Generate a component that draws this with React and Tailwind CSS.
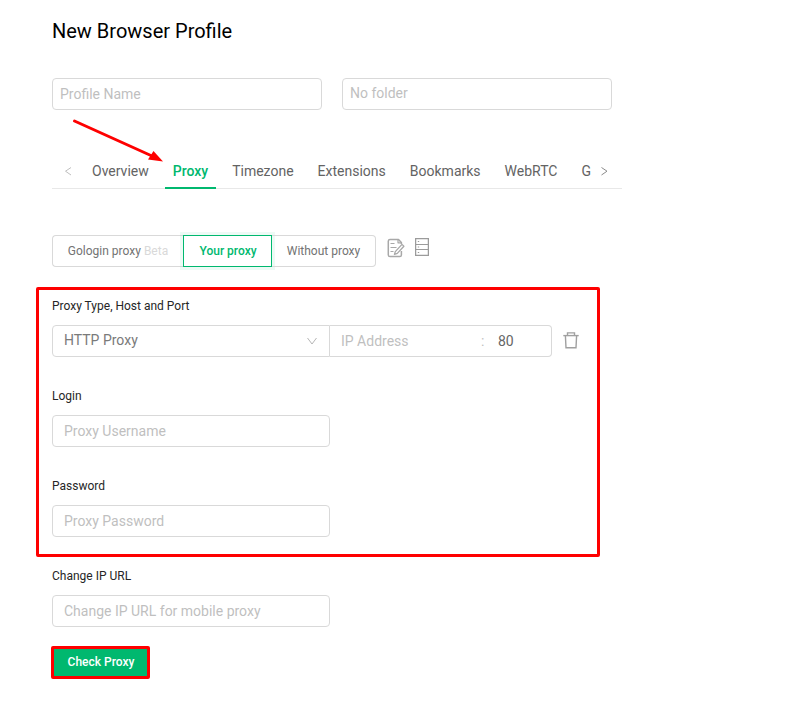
import { useState } from "react";

const tabs = ["Overview", "Proxy", "Timezone", "Extensions", "Bookmarks", "WebRTC", "G"];

const inputBase =
    "h-8 rounded border border-[#d9d9d9] bg-white text-sm text-[#595959] placeholder:text-[#bfbfbf] placeholder:opacity-100 outline-none";

/* ---------------------------------------------------------
   Icons
--------------------------------------------------------- */
function EditNoteIcon() {
    return (
        <svg width="18" height="20" viewBox="0 0 18 20" fill="none" stroke="#a8a8a8" strokeLinejoin="round">
            <path d="M14.4 6V4.5L11.5 1.5H3A1.7 1.7 0 0 0 1.3 3V17A1.7 1.7 0 0 0 3 18.6H12.8A1.7 1.7 0 0 0 14.4 17V13" strokeWidth="1.5" />
            <path d="M11 1.5V4.8H14.4" strokeWidth="1.2" />
            <path d="M3.5 5.5H7.5M3.5 9.5H9.5M3.5 13.5H6.5" strokeWidth="1.2" />
            <path d="M15 6.4L16.9 8.2L10.3 15.4L7.4 16.4L8.3 13.6Z" fill="#fff" strokeWidth="1.3" />
        </svg>
    );
}

function ServerIcon() {
    return (
        <svg width="14" height="18" viewBox="0 0 14 18" fill="none" stroke="#9b9b9b">
            <rect x="0.6" y="0.6" width="12.8" height="16.8" strokeWidth="1.3" />
            <path d="M0.5 6.5H13.5M0.5 11.5H13.5" strokeWidth="1.2" />
            <path d="M2.8 3.5H4.2M2.8 9H4.2M2.8 14.5H4.2" />
        </svg>
    );
}

function TrashIcon() {
    return (
        <svg width="16" height="17" viewBox="0 0 16 17" fill="none" stroke="#a0a0a0" strokeWidth="1.4">
            <path d="M0.3 3.6H15.7" />
            <path d="M4.5 3.5V0.9H11.5V3.5" />
            <path d="M2.4 3.6L3 15.8H13L13.6 3.6" />
        </svg>
    );
}

function Chevron({ d, className }) {
    return (
        <svg width="10" height="10" viewBox="0 0 10 10" fill="none" stroke="currentColor" className={className}>
            <path d={d} />
        </svg>
    );
}

function Field({ label, children }) {
    return (
        <div className="flex flex-col items-start">
            <label className="mb-[9px] text-xs leading-5 text-[#262626]">{label}</label>
            {children}
        </div>
    );
}

export default function App() {
    const [active, setActive] = useState("Proxy");

    return (
        <main className="relative min-h-[701px] bg-white pl-[52px] pt-[17px] font-['Roboto',sans-serif]">
            <h1 className="text-xl leading-7 text-black">New Browser Profile</h1>

            <div className="mt-[33px] flex gap-5">
                <input className={`${inputBase} w-[270px] px-[7px]`} placeholder="Profile Name" />
                <input className={`${inputBase} w-[270px] px-[7px] pb-0.5`} placeholder="No folder" />
            </div>

            {/* Tabs */}
            <nav className="mt-11 flex h-[35px] w-[570px] border-b border-[#e8e8e8] text-sm text-[#636363]">
                <button className="flex w-8 items-center justify-center text-[#bfbfbf]">
                    <Chevron d="M8 1.5L2.5 5.2L8 9" />
                </button>
                <div className="flex w-[508px] gap-2">
                    {tabs.map((tab) => (
                        <button
                            key={tab}
                            onClick={() => setActive(tab)}
                            className={`h-[35px] px-2 ${
                                active === tab ? "border-b-2 border-[#00b86f] pt-px font-medium text-[#00b86f]" : "pb-px"
                            }`}
                        >
                            {tab}
                        </button>
                    ))}
                </div>
                <button className="flex w-6 items-center justify-center text-[#8c8c8c]">
                    <Chevron d="M2.5 1.5L8 5.2L2.5 9" />
                </button>
            </nav>

            {/* Proxy source */}
            <div className="mt-[46px] flex h-8 text-xs text-[#737373]">
                <button className="w-[131px] rounded-l border border-r-0 border-[#d9d9d9]">
                    Gologin proxy <span className="text-[#d9d9d9]">Beta</span>
                </button>
                <button className="w-[89px] border border-[#00b86f] pl-px font-medium text-[#00b86f] shadow-[0_0_0_3px_rgba(0,184,111,0.07)]">
                    Your proxy
                </button>
                <button className="w-[104px] rounded-r border border-l-0 border-[#d9d9d9]">Without proxy</button>
                <div className="ml-[11px] flex items-start gap-[10px] pt-[3px]">
                    <EditNoteIcon />
                    <ServerIcon />
                </div>
            </div>

            {/* Highlighted connection settings */}
            <section className="-ml-4 mt-5 flex h-[270px] w-[564px] flex-col gap-[29px] rounded-[2px] border-[3px] border-[#fe0000] pl-[13px] pt-[6px]">
                <Field label="Proxy Type, Host and Port">
                    <div className="flex items-center">
                        <div className="flex h-8 w-[278px] items-center justify-between rounded-l border border-[#d9d9d9] pl-[11px] pr-3 text-sm text-[#7a7a7a]">
                            <span className="pb-0.5">HTTP Proxy</span>
                            <Chevron d="M0.5 2L5 8L9.5 2" className="text-[#b5b5b5]" />
                        </div>
                        <div className="flex h-8 w-[222px] items-center rounded-r border border-l-0 border-[#d9d9d9] pl-[11px] text-sm">
                            <input className="w-[139px] outline-none placeholder:text-[#bfbfbf]" placeholder="IP Address" />
                            <span className="w-[18px] pl-px text-[#bfbfbf]">:</span>
                            <input className="w-10 text-[#666666] outline-none" defaultValue="80" />
                        </div>
                        <button className="ml-[11px] pb-0.5">
                            <TrashIcon />
                        </button>
                    </div>
                </Field>
                <Field label="Login">
                    <input className={`${inputBase} w-[278px] px-[11px]`} placeholder="Proxy Username" />
                </Field>
                <Field label="Password">
                    <input className={`${inputBase} w-[278px] px-[11px]`} placeholder="Proxy Password" />
                </Field>
            </section>

            <div className="mt-[9px]">
                <Field label="Change IP URL">
                    <input className={`${inputBase} w-[278px] px-[11px]`} placeholder="Change IP URL for mobile proxy" />
                </Field>
            </div>

            <button className="-ml-px mt-[19px] block h-[33px] w-[99px] rounded-[2px] border-[3px] border-[#fe0000] bg-[#00b86f] pb-0.5 pl-px text-xs font-medium text-white">
                Check Proxy
            </button>

            {/* Arrow pointing at the active tab */}
            <svg className="pointer-events-none absolute left-[70px] top-[116px]" width="98" height="50" viewBox="0 0 98 50">
                <path d="M4.5 5L82 40" stroke="#fe0000" strokeWidth="3" strokeLinecap="round" />
                <path d="M93 45.5L78 43.5L83.5 35Z" fill="#fe0000" />
            </svg>
        </main>
    );
}
